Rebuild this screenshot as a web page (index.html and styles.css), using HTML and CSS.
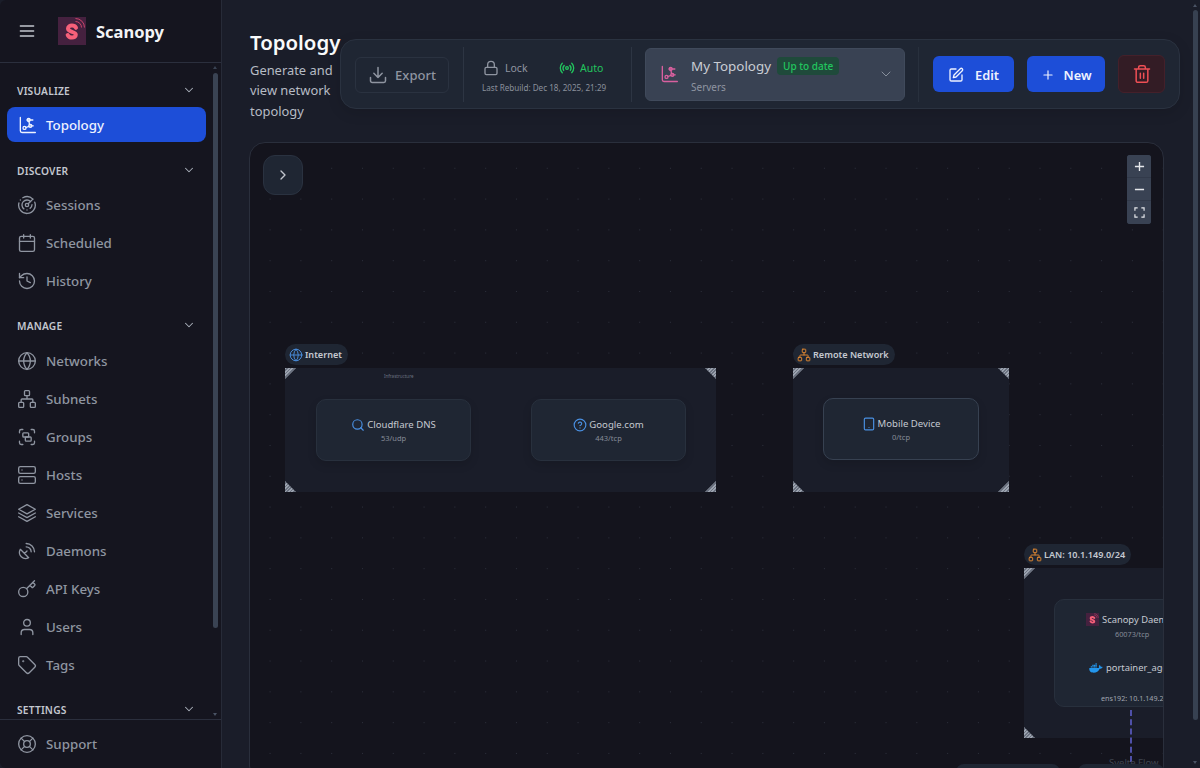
FILE: index.html
```html
<!DOCTYPE html>
<html lang="en">
<head>
<meta charset="utf-8">
<title>Scanopy Topology</title>
<link rel="stylesheet" href="styles.css">
</head>
<body>
<svg class="defs" width="0" height="0" aria-hidden="true">
  <defs>
    <symbol id="logo" viewBox="0 0 28 28">
      <rect width="28" height="28" fill="#45213f"/>
      <path d="M18 10.800c-.8-1.500-2.200-2.200-4-2.200-2.300 0-4 1.200-4 3 0 4 7.800 2.400 7.800 6.200 0 1.700-1.600 2.800-3.800 2.800-2 0-3.500-.8-4.300-2.500" fill="none" stroke="#f7607a" stroke-width="4" stroke-linecap="round"/>
      <path d="M17.500 1.500a9 9 0 0 1 9 9M17.500 4.500a6 6 0 0 1 6 6" fill="none" stroke="#c9446a" stroke-width="1"/>
    </symbol>
    <symbol id="topo" viewBox="0 0 24 24" fill="none" stroke="currentColor" stroke-width="1.600" stroke-linecap="round" stroke-linejoin="round">
      <path d="M4 3v16a2 2 0 0 0 2 2h16"/>
      <circle cx="9" cy="15.500" r="1.800"/><circle cx="16" cy="13" r="1.800"/><circle cx="14" cy="6" r="1.800"/>
      <path d="M10.800 15l3.500-1.300M15 11.500l-.6-3.700M12.200 6H19M16 13h3.500"/>
    </symbol>
    <symbol id="radar" viewBox="0 0 24 24" fill="none" stroke="currentColor" stroke-width="1.600" stroke-linecap="round">
      <path d="M19.070 4.930A10 10 0 0 0 6.990 3.340M4 6h.01M2.290 9.620a10 10 0 1 0 19.020-1.010M16.240 7.760a6 6 0 1 0-8.010 8.910M12 18h.01M17.990 11.660a6 6 0 0 1-2.220 4.340"/>
      <circle cx="12" cy="12" r="2"/><path d="m13.410 10.590 5.660-5.660"/>
    </symbol>
    <symbol id="cal" viewBox="0 0 24 24" fill="none" stroke="currentColor" stroke-width="1.600" stroke-linecap="round">
      <path d="M8 2v4M16 2v4M3 10h18"/><rect x="3" y="4" width="18" height="18" rx="2"/>
    </symbol>
    <symbol id="hist" viewBox="0 0 24 24" fill="none" stroke="currentColor" stroke-width="1.600" stroke-linecap="round" stroke-linejoin="round">
      <path d="M3 12a9 9 0 1 0 9-9 9.750 9.750 0 0 0-6.740 2.740L3 8"/><path d="M3 3v5h5M12 7v5l4 2"/>
    </symbol>
    <symbol id="globe" viewBox="0 0 24 24" fill="none" stroke="currentColor" stroke-width="1.600" stroke-linecap="round">
      <circle cx="12" cy="12" r="10"/><path d="M12 2a14.500 14.500 0 0 0 0 20 14.500 14.500 0 0 0 0-20M2 12h20"/>
    </symbol>
    <symbol id="net" viewBox="0 0 24 24" fill="none" stroke="currentColor" stroke-width="1.600" stroke-linecap="round" stroke-linejoin="round">
      <rect x="16" y="16" width="6" height="6" rx="1"/><rect x="2" y="16" width="6" height="6" rx="1"/><rect x="9" y="2" width="6" height="6" rx="1"/>
      <path d="M5 16v-3a1 1 0 0 1 1-1h12a1 1 0 0 1 1 1v3M12 12V8"/>
    </symbol>
    <symbol id="group" viewBox="0 0 24 24" fill="none" stroke="currentColor" stroke-width="1.600" stroke-linecap="round">
      <path d="M3 7V5c0-1.100.9-2 2-2h2M17 3h2c1.100 0 2 .9 2 2v2M21 17v2c0 1.100-.9 2-2 2h-2M7 21H5c-1.100 0-2-.9-2-2v-2"/>
      <rect x="7" y="7" width="7" height="5" rx="1"/><rect x="10" y="12" width="7" height="5" rx="1"/>
    </symbol>
    <symbol id="server" viewBox="0 0 24 24" fill="none" stroke="currentColor" stroke-width="1.600" stroke-linecap="round">
      <rect x="2" y="2" width="20" height="8" rx="2"/><rect x="2" y="14" width="20" height="8" rx="2"/><path d="M6 6h.01M6 18h.01"/>
    </symbol>
    <symbol id="layers" viewBox="0 0 24 24" fill="none" stroke="currentColor" stroke-width="1.600" stroke-linecap="round" stroke-linejoin="round">
      <path d="M12 2 2 7.500 12 13l10-5.500z"/><path d="m2 12 10 5.500L22 12M2 16.500 12 22l10-5.500"/>
    </symbol>
    <symbol id="dish" viewBox="0 0 24 24" fill="none" stroke="currentColor" stroke-width="1.600" stroke-linecap="round" stroke-linejoin="round">
      <path d="M4 10a7.310 7.310 0 0 0 10 10zM9 15l3-3M17 13a6 6 0 0 0-6-6M21 13A10 10 0 0 0 11 3"/>
    </symbol>
    <symbol id="key" viewBox="0 0 24 24" fill="none" stroke="currentColor" stroke-width="1.600" stroke-linecap="round" stroke-linejoin="round">
      <path d="m15.500 7.500 2.300 2.300a1 1 0 0 0 1.400 0l2.100-2.100a1 1 0 0 0 0-1.400L19 4M21 2l-9.600 9.600"/><circle cx="7.500" cy="15.500" r="5.500"/>
    </symbol>
    <symbol id="user" viewBox="0 0 24 24" fill="none" stroke="currentColor" stroke-width="1.600" stroke-linecap="round">
      <path d="M19 21v-2a4 4 0 0 0-4-4H9a4 4 0 0 0-4 4v2"/><circle cx="12" cy="7" r="4"/>
    </symbol>
    <symbol id="tag" viewBox="0 0 24 24" fill="none" stroke="currentColor" stroke-width="1.600" stroke-linecap="round" stroke-linejoin="round">
      <path d="M12.590 2.590A2 2 0 0 0 11.170 2H4a2 2 0 0 0-2 2v7.170a2 2 0 0 0 .590 1.410l8.710 8.710a2.430 2.430 0 0 0 3.420 0l6.580-6.580a2.430 2.430 0 0 0 0-3.420z"/><circle cx="7.500" cy="7.500" r=".5"/>
    </symbol>
    <symbol id="life" viewBox="0 0 24 24" fill="none" stroke="currentColor" stroke-width="1.600" stroke-linecap="round">
      <circle cx="12" cy="12" r="10"/><circle cx="12" cy="12" r="4"/><path d="m4.930 4.930 4.240 4.240M14.830 9.170l4.240-4.240M14.830 14.830l4.240 4.240M9.170 14.830l-4.240 4.240"/>
    </symbol>
    <symbol id="chev" viewBox="0 0 24 24" fill="none" stroke="currentColor" stroke-width="1.800" stroke-linecap="round" stroke-linejoin="round">
      <path d="m6 9 6 6 6-6"/>
    </symbol>
  </defs>
</svg>

<div class="app">
  <aside class="sidebar">
    <header class="brand">
      <svg class="burger" viewBox="0 0 24 24" fill="none" stroke="currentColor" stroke-width="1.600" stroke-linecap="round"><path d="M4 6h16M4 12h16M4 18h16"/></svg>
      <svg class="brand-logo"><use href="#logo"/></svg>
      <span class="brand-name">Scanopy</span>
    </header>
    <nav class="nav">
      <div class="nav-scroll">
        <div class="sec sec-first"><span>VISUALIZE</span><svg class="chev"><use href="#chev"/></svg></div>
        <a class="item active"><svg class="ico"><use href="#topo"/></svg>Topology</a>
        <div class="sec sec-discover"><span>DISCOVER</span><svg class="chev"><use href="#chev"/></svg></div>
        <a class="item"><svg class="ico"><use href="#radar"/></svg>Sessions</a>
        <a class="item"><svg class="ico"><use href="#cal"/></svg>Scheduled</a>
        <a class="item"><svg class="ico"><use href="#hist"/></svg>History</a>
        <div class="sec"><span>MANAGE</span><svg class="chev"><use href="#chev"/></svg></div>
        <a class="item"><svg class="ico"><use href="#globe"/></svg>Networks</a>
        <a class="item"><svg class="ico"><use href="#net"/></svg>Subnets</a>
        <a class="item"><svg class="ico"><use href="#group"/></svg>Groups</a>
        <a class="item"><svg class="ico"><use href="#server"/></svg>Hosts</a>
        <a class="item"><svg class="ico"><use href="#layers"/></svg>Services</a>
        <a class="item"><svg class="ico"><use href="#dish"/></svg>Daemons</a>
        <a class="item"><svg class="ico"><use href="#key"/></svg>API Keys</a>
        <a class="item"><svg class="ico"><use href="#user"/></svg>Users</a>
        <a class="item"><svg class="ico"><use href="#tag"/></svg>Tags</a>
        <div class="sec"><span>SETTINGS</span><svg class="chev"><use href="#chev"/></svg></div>
      </div>
      <div class="scrollbar"><i class="arrow-up"></i><b class="thumb"></b><i class="arrow-down"></i></div>
    </nav>
    <footer class="side-foot">
      <a class="item"><svg class="ico"><use href="#life"/></svg>Support</a>
    </footer>
  </aside>

  <main class="main">
    <div class="head">
      <div class="title-block">
        <h1>Topology</h1>
        <p>Generate and view network topology</p>
      </div>
      <div class="toolbar">
        <button class="btn-export">
          <svg class="ico-20" viewBox="0 0 24 24" fill="none" stroke="currentColor" stroke-width="1.800" stroke-linecap="round" stroke-linejoin="round"><path d="M21 15v4a2 2 0 0 1-2 2H5a2 2 0 0 1-2-2v-4M7 10l5 5 5-5M12 15V3"/></svg>
          Export
        </button>
        <div class="sep"></div>
        <div class="state">
          <div class="state-row">
            <span class="lock"><svg class="ico-16" viewBox="0 0 24 24" fill="none" stroke="currentColor" stroke-width="2" stroke-linecap="round"><rect x="3" y="11" width="18" height="11" rx="2"/><path d="M7 11V7a5 5 0 0 1 10 0v4"/></svg>Lock</span>
            <span class="auto"><svg class="ico-16" viewBox="0 0 24 24" fill="none" stroke="currentColor" stroke-width="2" stroke-linecap="round"><path d="M4.900 16.100C1 12.200 1 5.800 4.900 1.900" transform="translate(0 3)"/><path d="M7.800 4.700a6.140 6.140 0 0 0-.8 7.500" transform="translate(0 3.500)"/><circle cx="12" cy="12" r="2"/><path d="M16.200 4.800c2 2 2.260 5.110.8 7.470" transform="translate(0 3.500)"/><path d="M19.100 1.900a9.960 9.960 0 0 1 0 14.100" transform="translate(0 3)"/></svg>Auto</span>
          </div>
          <div class="rebuild">Last Rebuild: Dec 18, 2025, 21:29</div>
        </div>
        <div class="sep"></div>
        <div class="select">
          <svg class="select-ico"><use href="#topo"/></svg>
          <div class="select-text">
            <div class="select-top"><span class="select-name">My Topology</span><span class="badge">Up to date</span></div>
            <div class="select-sub">Servers</div>
          </div>
          <svg class="select-chev" viewBox="0 0 24 24" fill="none" stroke="currentColor" stroke-width="1.200" stroke-linecap="round" stroke-linejoin="round"><path d="m6 9 6 6 6-6"/></svg>
        </div>
        <div class="sep sep-dim"></div>
        <button class="btn-blue btn-edit">
          <svg class="ico-16" viewBox="0 0 24 24" fill="none" stroke="currentColor" stroke-width="2" stroke-linecap="round" stroke-linejoin="round"><path d="M12 3H5a2 2 0 0 0-2 2v14a2 2 0 0 0 2 2h14a2 2 0 0 0 2-2v-7"/><path d="M18.400 2.600a2.120 2.120 0 1 1 3 3L12 15l-4 1 1-4z"/></svg>
          Edit
        </button>
        <button class="btn-blue btn-new">
          <svg class="ico-14" viewBox="0 0 24 24" fill="none" stroke="currentColor" stroke-width="2" stroke-linecap="round"><path d="M5 12h14M12 5v14"/></svg>
          New
        </button>
        <button class="btn-del">
          <svg class="ico-20" viewBox="0 0 24 24" fill="none" stroke="currentColor" stroke-width="1.800" stroke-linecap="round" stroke-linejoin="round"><path d="M3 6h18M19 6v14a2 2 0 0 1-2 2H7a2 2 0 0 1-2-2V6M8 6V4a2 2 0 0 1 2-2h4a2 2 0 0 1 2 2v2M10 11v6M14 11v6"/></svg>
        </button>
      </div>
    </div>

    <section class="canvas">
      <button class="panel-toggle"><svg class="ico-16" viewBox="0 0 24 24" fill="none" stroke="currentColor" stroke-width="2" stroke-linecap="round" stroke-linejoin="round"><path d="m9 18 6-6-6-6"/></svg></button>

      <div class="zoom">
        <button><svg viewBox="0 0 12 12" fill="none" stroke="currentColor" stroke-width="1.500"><path d="M1 6h10M6 1v10"/></svg></button>
        <button><svg viewBox="0 0 12 12" fill="none" stroke="currentColor" stroke-width="1.500"><path d="M1 6h10"/></svg></button>
        <button><svg viewBox="0 0 12 12" fill="none" stroke="currentColor" stroke-width="1.300"><path d="M1 4V1h3M8 1h3v3M11 8v3H8M4 11H1V8"/></svg></button>
      </div>

      <div class="chip chip-internet"><svg class="chip-ico blue"><use href="#globe"/></svg>Internet</div>
      <div class="group group-internet">
        <i class="h tl"></i><i class="h tr"></i><i class="h bl"></i><i class="h br"></i>
        <span class="infra">Infrastructure</span>
        <div class="node">
          <div class="node-title"><svg class="node-ico blue" viewBox="0 0 24 24" fill="none" stroke="currentColor" stroke-width="2" stroke-linecap="round"><circle cx="11" cy="11" r="8"/><path d="m21 21-4.300-4.300"/></svg>Cloudflare DNS</div>
          <div class="node-sub">53/udp</div>
        </div>
        <div class="node">
          <div class="node-title"><svg class="node-ico blue" viewBox="0 0 24 24" fill="none" stroke="currentColor" stroke-width="2" stroke-linecap="round"><circle cx="12" cy="12" r="10"/><path d="M9.090 9a3 3 0 0 1 5.830 1c0 2-3 3-3 3M12 17h.01"/></svg>Google.com</div>
          <div class="node-sub">443/tcp</div>
        </div>
      </div>

      <div class="chip chip-remote"><svg class="chip-ico orange"><use href="#net"/></svg>Remote Network</div>
      <div class="group group-remote">
        <i class="h tl"></i><i class="h tr"></i><i class="h bl"></i><i class="h br"></i>
        <div class="node node-outlined">
          <div class="node-title"><svg class="node-ico blue" viewBox="0 0 24 24" fill="none" stroke="currentColor" stroke-width="2" stroke-linecap="round"><rect x="4" y="2" width="16" height="20" rx="2"/><path d="M12 18h.01"/></svg>Mobile Device</div>
          <div class="node-sub">0/tcp</div>
        </div>
      </div>

      <div class="chip chip-lan"><svg class="chip-ico orange"><use href="#net"/></svg>LAN: 10.1.149.0/24</div>
      <div class="group group-lan">
        <i class="h tl"></i><i class="h bl"></i>
        <div class="host">
          <div class="host-row"><svg class="host-logo"><use href="#logo"/></svg>Scanopy Daemon</div>
          <div class="host-sub">60073/tcp</div>
          <div class="host-row host-row-2">
            <svg class="docker" viewBox="0 0 24 16"><path fill="#2396ed" d="M23.500 6.500c-.6-.4-2-.6-3.100-.3-.1-1.100-.8-2-1.900-2.900l-.6-.4-.4.600c-.5.800-.7 1.900-.6 2.700.1.500.2 1 .5 1.500-.7.400-1.800.5-2.200.5H.6c-.3 1.100-.3 4.300 1.800 6.300C4 16 6 16 8 16c4.600 0 8.500-2 10.300-6.800 1.600.1 3.800-.4 4.700-2.200z"/><path fill="#2396ed" d="M3 5h2.200v2.200H3zM5.700 5h2.200v2.200H5.700zM8.400 5h2.200v2.200H8.400zM11.100 5h2.200v2.200h-2.200zM5.700 2.400h2.200v2.200H5.700zM8.400 2.400h2.200v2.200H8.400zM11.100 2.400h2.200v2.200h-2.200zM11.100 0h2.200v2h-2.200z"/></svg>
            portainer_agent
          </div>
          <div class="host-foot">ens192: 10.1.149.26</div>
        </div>
      </div>
      <i class="edge"></i>
      <span class="attribution">Svelte Flow</span>
      <i class="stub stub-a"></i>
      <i class="stub stub-b"></i>
    </section>
  </main>

  <div class="page-scroll"><i class="page-up"></i><b></b><i class="page-down"></i></div>
</div>
</body>
</html>
```

FILE: styles.css
```css
* { box-sizing: border-box; }
html, body { margin: 0; height: 100%; overflow: hidden; }
body { background: #1a1d29; font-family: "Noto Sans", "Open Sans", "Liberation Sans", sans-serif; color: #d1d5db; }
.defs { position: absolute; }
button { font-family: inherit; border: 0; padding: 0; }

.app { display: flex; width: 1200px; height: 768px; background: #1a1d29; }

/* Sidebar */
.sidebar { width: 222px; flex: none; height: 768px; display: flex; flex-direction: column; background: #15151f; border-right: 1px solid #272b38; border-radius: 6px 0 0 6px; }
.brand { height: 63px; flex: none; display: flex; align-items: center; border-bottom: 1px solid #2b2f3d; padding-left: 17px; }
.burger { width: 20px; height: 20px; color: #c2c6ce; flex: none; }
.brand-logo { width: 28px; height: 28px; margin-left: 21px; flex: none; }
.brand-name { margin-left: 10px; font-size: 16.500px; font-weight: 700; color: #f3f4f6; }

.nav { flex: 1; min-height: 0; position: relative; display: flex; overflow: hidden; }
.nav-scroll { flex: 1; padding: 0 7px; min-width: 0; }
.sec { height: 16px; margin: 18px 10px 8px 10px; display: flex; justify-content: space-between; align-items: center; font-size: 10.200px; font-weight: 600; letter-spacing: .2px; color: #c3c7cf; }
.sec-first { margin-top: 20px; margin-bottom: 8px; }
.sec-discover { margin-top: 21px; margin-bottom: 7px; }
.chev { width: 14px; height: 14px; color: #aab0ba; margin-top: -3px; flex: none; }
.item { height: 38px; display: flex; align-items: center; gap: 9px; padding-left: 10px; font-size: 13.300px; font-weight: 500; color: #8f95a1; }
.item.active { height: 35px; background: #1d4ed8; color: #eef2ff; border-radius: 8px; }
.ico { width: 20px; height: 20px; flex: none; }

.scrollbar { position: relative; width: 7px; flex: none; margin-right: 1px; }
.thumb { position: absolute; top: 10px; left: 0; width: 5px; height: 555px; border-radius: 3px; background: #3a4353; }
.arrow-up, .arrow-down { position: absolute; left: 0; width: 0; height: 0; border-left: 2.500px solid transparent; border-right: 2.500px solid transparent; }
.arrow-up { top: 3px; border-bottom: 3px solid #3a4353; }
.arrow-down { bottom: 3px; border-top: 3px solid #4a5364; }

.side-foot { height: 49px; flex: none; border-top: 1px solid #2b2f3d; padding: 5px 7px 0; }

/* Main */
.main { flex: 1; min-width: 0; padding: 27px 0 0 28px; position: relative; }
.head { position: relative; height: 115px; }
.title-block { width: 90px; }
h1 { margin: 0; font-size: 20.400px; line-height: 30px; font-weight: 600; color: #f9fafb; white-space: nowrap; }
.title-block p { margin: 2.500px 0 0; font-size: 12.900px; line-height: 20.500px; color: #b6bbc4; }

.toolbar { position: absolute; left: 90px; top: 12px; width: 840px; height: 70px; display: flex; align-items: center; background: #1f2633; border: 1px solid #2a3240; border-radius: 16px; box-shadow: 0 4px 14px rgba(0,0,0,.12); padding-left: 14px; }
.btn-export { width: 94px; height: 36px; margin-top: 1px; display: flex; align-items: center; justify-content: center; gap: 7px; background: transparent; border: 1px solid #2a3240; border-radius: 6px; color: #8f95a1; font-size: 13px; font-weight: 500; }
.ico-20 { width: 20px; height: 20px; flex: none; }
.ico-16 { width: 16px; height: 16px; flex: none; }
.ico-14 { width: 14px; height: 14px; flex: none; }
.sep { width: 1px; height: 55px; background: #2d3543; margin: 0 14px; flex: none; }
.sep-dim { background: #28303d; margin: 0 14px 0 13px; }
.state { width: 139px; flex: none; display: flex; flex-direction: column; gap: 6px; padding: 5px 0 0 4px; }
.state-row { display: flex; padding-left: 1px; }
.lock, .auto { display: inline-flex; align-items: center; font-size: 10.500px; gap: 5px; }
.lock { color: #8f95a1; width: 76px; gap: 6px; }
.auto { color: #22c55e; }
.rebuild { font-size: 8.100px; color: #8a909b; white-space: nowrap; }

.select { width: 260px; height: 53px; flex: none; display: flex; align-items: center; background: #394253; border: 1px solid #404a5b; border-radius: 6px; margin-left: -1px; padding-left: 13px; }
.select-ico { width: 20px; height: 20px; color: #d9609f; flex: none; }
.select-text { margin-left: 12px; flex: 1; }
.select-top { display: flex; align-items: center; gap: 6px; height: 24px; }
.select-name { font-size: 13.400px; color: #c9cdd4; }
.badge { font-size: 10px; font-weight: 500; color: #22c55e; background: #1f4a3b; border-radius: 4px; padding: 2px 6px; }
.select-sub { font-size: 10px; color: #8f95a1; margin-top: 2px; }
.select-chev { width: 16px; height: 16px; color: #9ca3af; margin-right: 10px; flex: none; }

.btn-blue { height: 36px; flex: none; padding-top: 1px; display: flex; align-items: center; justify-content: center; background: #1d4ed8; color: #eef2ff; border-radius: 6px; font-size: 12.800px; font-weight: 600; }
.btn-edit { width: 81px; gap: 11px; }
.btn-new { width: 78px; gap: 9px; margin-left: 13px; }
.btn-del { width: 47px; height: 38px; flex: none; margin-left: 13px; background: #331c25; border: 1px solid #44202a; border-radius: 6px; color: #ef4f55; display: flex; align-items: center; justify-content: center; }

/* Canvas */
.canvas { position: absolute; left: 27px; top: 142px; width: 915px; height: 640px; background-color: #14141d; background-image: radial-gradient(circle, #2d303c 0.6px, transparent 0.9px); background-size: 30.800px 30.800px; background-position: 4.700px 9.900px; border: 1px solid #2a2f3c; border-radius: 16px; overflow: hidden; }
.panel-toggle { position: absolute; left: 13px; top: 12px; width: 40px; height: 40px; border-radius: 12px; background: #1f2633; border: 1px solid #2a3240; color: #c2c6ce; display: flex; align-items: center; justify-content: center; }
.zoom { position: absolute; left: 877px; top: 12px; width: 24px; display: flex; flex-direction: column; border-radius: 3px; overflow: hidden; background: #394253; }
.zoom button { height: 23px; background: #394253; border-bottom: 1px solid #323a4a; color: #e5e7eb; display: flex; align-items: center; justify-content: center; }
.zoom button:last-child { border-bottom: 0; }
.zoom svg { width: 11px; height: 11px; }

.chip { position: absolute; height: 21px; display: flex; align-items: center; gap: 2px; padding: 0 6px 0 4px; background: #1f2633; border-radius: 11px; font-size: 9.100px; font-weight: 600; color: #c5c9d1; white-space: nowrap; }
.chip-ico { width: 14px; height: 14px; flex: none; }
.blue { color: #4a90e2; }
.orange { color: #e58a32; }
.chip-internet { left: 35px; top: 201px; }
.chip-remote { left: 543px; top: 201px; }
.chip-lan { left: 774px; top: 401px; }

.group { position: absolute; background: #1a1d29; display: flex; }
.group-internet { left: 35px; top: 225px; width: 431px; height: 124px; padding-top: 31px; justify-content: space-between; padding-left: 31px; padding-right: 30px; }
.group-remote { left: 543px; top: 225px; width: 216px; height: 124px; padding-left: 30px; padding-top: 30px; }
.group-lan { left: 774px; top: 425px; width: 160px; height: 170px; padding-left: 30px; padding-top: 31px; }

.h { position: absolute; width: 11px; height: 11px; background: repeating-linear-gradient(135deg, #9ca3af 0 1.200px, #6b7280 1.200px 2.400px); }
.tl { left: 0; top: 0; clip-path: polygon(0 0, 100% 0, 0 100%); }
.tr { right: 0; top: 0; clip-path: polygon(0 0, 100% 0, 100% 100%); }
.bl { left: 0; bottom: 0; clip-path: polygon(0 0, 100% 100%, 0 100%); }
.br { right: 0; bottom: 0; clip-path: polygon(100% 0, 100% 100%, 0 100%); }
.infra { position: absolute; left: 99px; top: 5px; font-size: 4.500px; color: #6b7280; }

.node { width: 155px; height: 62px; display: flex; flex-direction: column; align-items: center; justify-content: center; background: #1f2633; border: 1px solid #28303d; border-radius: 10px; box-shadow: 0 4px 10px rgba(0,0,0,.12); }
.node-outlined { width: 156px; border-color: #374151; }
.node-title { display: flex; align-items: center; gap: 2px; font-size: 9.600px; color: #c5c9d1; }
.node-ico { width: 14px; height: 14px; flex: none; }
.node-sub { font-size: 7.500px; color: #868c98; margin-top: 1px; }

.host { width: 200px; height: 108px; flex: none; background: #1f2633; border: 1px solid #28303d; border-radius: 10px; padding: 13px 0 0 31px; position: relative; }
.host-row { display: flex; align-items: center; gap: 3px; font-size: 9.400px; color: #c5c9d1; white-space: nowrap; }
.host-row-2 { margin: 22px 0 0 3px; gap: 3px; }
.host-logo { width: 13px; height: 13px; flex: none; }
.host-sub { font-size: 7.300px; color: #868c98; margin: 3px 0 0 29px; }
.docker { width: 14px; height: 10px; flex: none; }
.host-foot { position: absolute; left: 46px; top: 93px; font-size: 7.200px; color: #a0a5af; white-space: nowrap; }

.edge { position: absolute; left: 880px; top: 567px; height: 52px; border-left: 2px dashed #4f50a8; }
.attribution { position: absolute; left: 859px; top: 613px; font-size: 9.500px; color: #3f4450; }
.stub { position: absolute; top: 621px; height: 20px; background: #1f2633; border-radius: 8px 8px 0 0; }
.stub-a { left: 706px; width: 104px; }
.stub-b { left: 828px; width: 86px; }

.page-scroll { position: absolute; left: 1190px; top: 0; width: 10px; height: 768px; }
.page-scroll b { position: absolute; left: 3px; top: 10px; width: 5px; height: 710px; background: #374151; border-radius: 3px; }
.page-up, .page-down { position: absolute; left: 3px; width: 0; height: 0; border-left: 2.500px solid transparent; border-right: 2.500px solid transparent; }
.page-up { top: 4px; border-bottom: 3px solid #4a5364; }
.page-down { bottom: 4px; border-top: 3px solid #4a5364; }
```
